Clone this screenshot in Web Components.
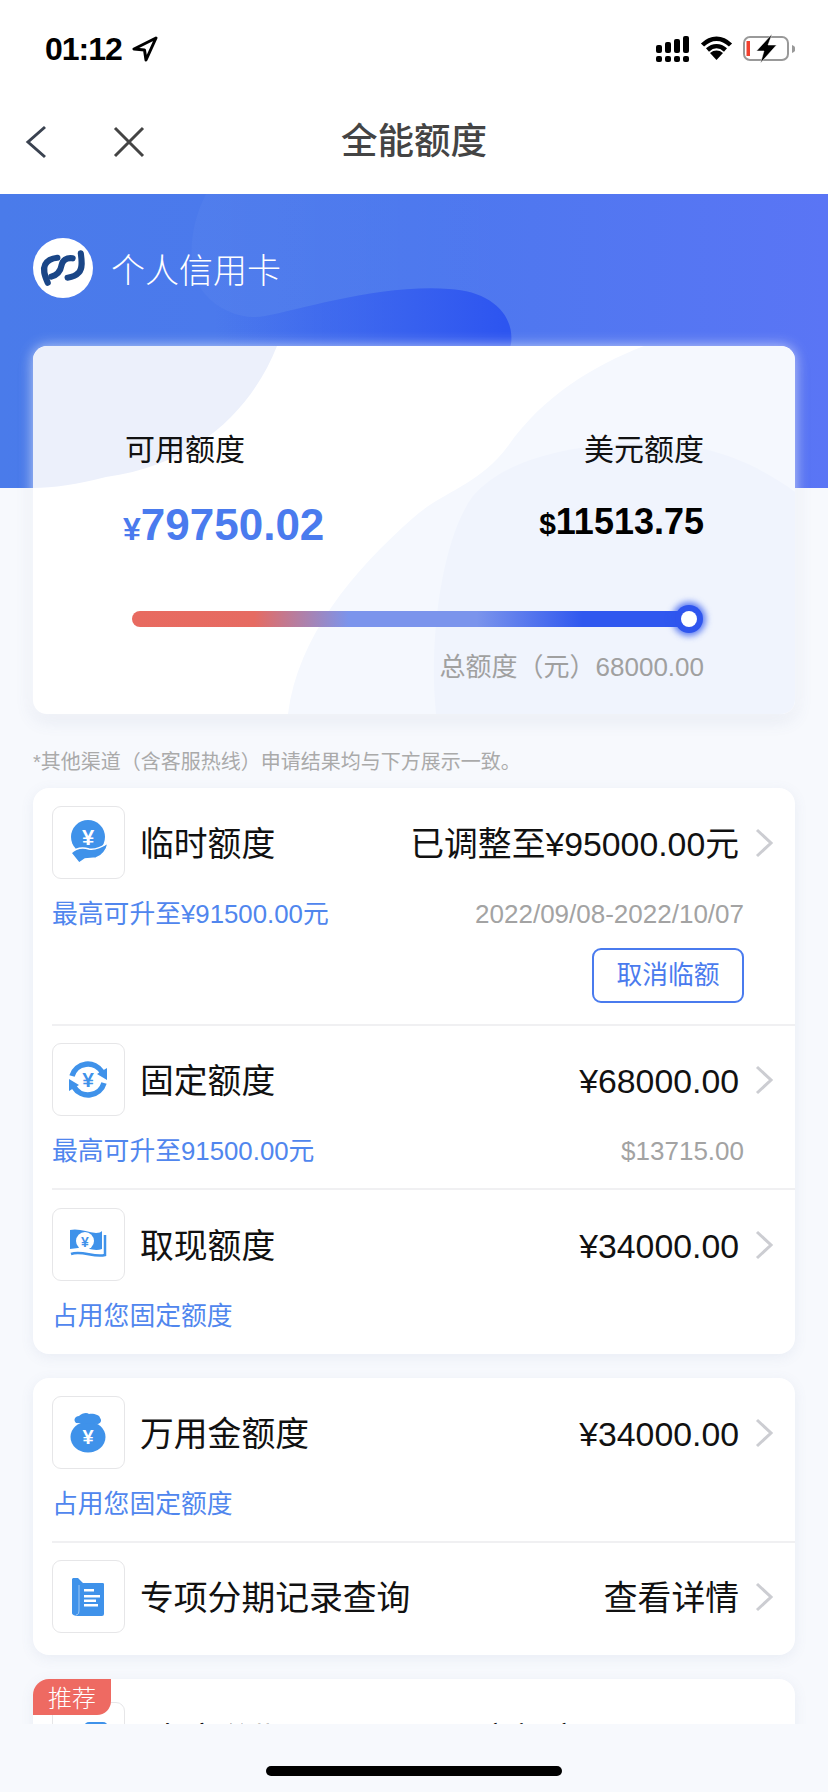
<!DOCTYPE html>
<html lang="zh-CN">
<head>
<meta charset="utf-8">
<title>全能额度</title>
<style>
  html, body { margin: 0; padding: 0; background: #f7f9fd; }
  body { width: 828px; height: 1792px; overflow: hidden; font-family: "Liberation Sans", "Noto Sans CJK SC", sans-serif; }
</style>
</head>
<body>
<quota-app></quota-app>

<script>
class StatusBar extends HTMLElement {
    constructor() {
        super();
        this.shadow = this.attachShadow({mode:'open'});
    }

    connectedCallback() {
        this.shadow.innerHTML = `
        <style>
            :host { display: flex; height: 98px; align-items: center; justify-content: space-between; padding: 0 33px 0 45px; background: #fff; box-sizing: border-box; }
            .left { display: flex; align-items: center; gap: 10px; }
            .time { font: 700 32px/1 "Liberation Sans", sans-serif; letter-spacing: -1px; color: #000; }
            svg { display: block; }
        </style>
        <div class="left">
            <span class="time">01:12</span>
            <svg width="26" height="26" viewBox="0 0 26 26"><path d="M24 2 L2 13 L12.5 14 L14 24 Z" fill="none" stroke="#000" stroke-width="3" stroke-linejoin="round"/></svg>
        </div>
        <svg width="140" height="30" viewBox="654 35 140 30">
            <g fill="#000">
                <rect x="655" y="46" width="6" height="8" rx="2"/>
                <rect x="664" y="43" width="6" height="11" rx="2"/>
                <rect x="673" y="40" width="6" height="14" rx="2"/>
                <rect x="682" y="37" width="6" height="17" rx="2"/>
                <rect x="655" y="57" width="6" height="6" rx="2"/>
                <rect x="664" y="57" width="6" height="6" rx="2"/>
                <rect x="673" y="57" width="6" height="6" rx="2"/>
                <rect x="682" y="57" width="6" height="6" rx="2"/>
                <path d="M715.5 61 L709 54 C713 50.700 718 50.700 722 54 Z"/>
            </g>
            <g fill="none" stroke="#000" stroke-width="4.500">
                <path d="M701.5 46 C710 37.5 721 37.5 729.5 46"/>
                <path d="M706.5 51 C712 46 719 46 724.5 51"/>
            </g>
            <rect x="743" y="38" width="44" height="23" rx="6" fill="none" stroke="#999" stroke-width="2"/>
            <path d="M791 46 C793.5 47 794.5 48.5 794.5 50 C794.5 51.5 793.5 53 791 54 Z" fill="#999"/>
            <rect x="745.5" y="42" width="3.5" height="15" fill="#f0402e"/>
            <path d="M771 35 L755.500 52 L763 52 L759.500 64 L775.500 46 L767 46 Z" fill="#000" stroke="#fff" stroke-width=".5"/>
        </svg>
        `;
    }
}

class NavBar extends HTMLElement {
    constructor() {
        super();
        this.shadow = this.attachShadow({mode:'open'});
    }

    connectedCallback() {
        this.shadow.innerHTML = `
        <style>
            :host { display: grid; grid-template-columns: 1fr auto 1fr; height: 96px; padding-bottom: 8px; box-sizing: border-box; align-items: center; background: #fff; }
            .btns { display: flex; align-items: center; gap: 66px; padding-left: 25px; }
            .title { font-size: 36.500px; line-height: 1; font-weight: 500; color: #444; }
            svg { display: block; }
        </style>
        <div class="btns">
            <svg width="22" height="34" viewBox="0 0 22 34"><path d="M20 2 L3 17 L20 32" fill="none" stroke="#3a4250" stroke-width="3"/></svg>
            <svg width="32" height="32" viewBox="0 0 32 32"><path d="M2 2 L30 30 M30 2 L2 30" fill="none" stroke="#444" stroke-width="3"/></svg>
        </div>
        <div class="title"><slot></slot></div>
        <div></div>
        `;
    }
}

class BankHero extends HTMLElement {
    constructor() {
        super();
        this.shadow = this.attachShadow({mode:'open'});
    }

    connectedCallback() {
        this.shadow.innerHTML = `
        <style>
            :host { display: block; position: relative; height: 294px; overflow: hidden; background: linear-gradient(90deg, #4a7bea 0%, #4c78ee 50%, #5a75f5 100%); }
            .deco { position: absolute; inset: 0; }
            .brand { position: relative; display: flex; align-items: center; gap: 18px; padding: 44px 0 0 33px; }
            .name { padding-top: 6px; font-size: 34px; line-height: 1; font-weight: 300; color: #fff; }
            svg { display: block; }
        </style>
        <svg class="deco" width="828" height="294" viewBox="0 0 828 294">
            <defs>
                <linearGradient id="lt" x1="190" x2="520" y1="0" y2="0" gradientUnits="userSpaceOnUse">
                    <stop offset="0" stop-color="#fff" stop-opacity=".03"/>
                    <stop offset="1" stop-color="#fff" stop-opacity="0"/>
                </linearGradient>
                <linearGradient id="dk" x1="215" x2="505" y1="0" y2="0" gradientUnits="userSpaceOnUse">
                    <stop offset="0" stop-color="#3058ef" stop-opacity="0"/>
                    <stop offset=".4" stop-color="#3058ef" stop-opacity=".45"/>
                    <stop offset="1" stop-color="#2d55f0"/>
                </linearGradient>
            </defs>
            <path d="M206 0 C188 35 186 78 205 100 C220 118 245 126 265 122 C300 116 380 90 449 95 C490 97 515 120 511 150 L828 150 V0 Z" fill="url(#lt)"/>
            <path d="M205 100 C220 118 245 126 265 122 C300 116 380 90 449 95 C490 97 515 120 511 150 L505 170 H190 Z" fill="url(#dk)"/>
        </svg>
        <div class="brand">
            <svg width="60" height="60" viewBox="0 0 59 59">
                <circle cx="29.500" cy="29.500" r="29.500" fill="#fff"/>
                <g fill="none" stroke="#1a4687" stroke-width="6" stroke-linecap="round">
                    <path d="M14.500 44 C11 36 9.500 31 12 26 C14.500 21.500 19 20 24 19.500"/>
                    <path d="M39 20 C33 19 29 22 28 27 C27 33 23 36.500 18 38"/>
                    <path d="M47 15 C48 22 49 30 45 34 C42 37.500 38 38.500 34 39"/>
                </g>
            </svg>
            <span class="name"><slot></slot></span>
        </div>
        `;
    }
}

class LimitPanel extends HTMLElement {
    constructor() {
        super();
        this.shadow = this.attachShadow({mode:'open'});
    }

    connectedCallback() {
        this.shadow.innerHTML = `
        <style>
            :host { display: block; position: relative; margin: -142px 33px 0; height: 368px; border-radius: 14px; background: #fff; box-shadow: 0 0 14px rgba(255,255,255,.65), 0 6px 18px rgba(90,110,160,.12); }
            .deco { position: absolute; inset: 0; border-radius: 14px; }
            .body { position: relative; padding: 84px 91px 0 92px; }
            .cols { display: flex; justify-content: space-between; }
            .col.right { text-align: right; }
            .label { font-size: 30px; line-height: 40px; color: #111; }
            .amount { height: 50px; line-height: 50px; margin: 30px 0 0 -2px; font-weight: 700; font-size: 44px; color: #4a7bee; font-family: "Liberation Sans", sans-serif; }
            .amount small { font-size: 32px; }
            .right .amount { margin-top: 27px; font-size: 36px; color: #000; }
            .right .amount small { font-size: 30px; }
            .track { position: relative; height: 16px; margin: 61px 16px 0 7px; border-radius: 8px; background: linear-gradient(90deg, #e86a60 0%, #e66b62 22%, #7b94ec 39%, #7b94ec 62%, #3058ef 81%, #3058ef 100%); }
            .knob { position: absolute; right: -9px; top: 0; width: 16px; height: 16px; border-radius: 50%; background: #fff; box-shadow: 0 0 0 6px #2f55ee, 0 0 6px 9px rgba(47,85,238,.75); }
            .total { margin-top: 25px; text-align: right; font-size: 26px; line-height: 30px; color: #a0a0a0; }
            svg { display: block; }
        </style>
        <svg class="deco" width="762" height="368" viewBox="0 0 762 368">
            <defs><clipPath id="round"><rect width="762" height="368" rx="14"/></clipPath></defs>
            <g clip-path="url(#round)">
                <path d="M0 0 H244 C222 56 170 118 73 131 Q30 142 0 142 Z" fill="#ecf0fb"/>
                <path d="M611 0 C560 20 510 50 475 100 C445 140 410 145 380 172 C320 225 265 290 255 368 H762 V0 Z" fill="#f5f8fe"/>
                <path d="M762 146 C710 108 660 95 600 97 C530 100 470 115 440 150 C410 190 395 290 403 368 H762 Z" fill="#f0f4fd"/>
            </g>
        </svg>
        <div class="body">
            <div class="cols">
                <div class="col">
                    <div class="label">可用额度</div>
                    <div class="amount"><small>¥</small>79750.02</div>
                </div>
                <div class="col right">
                    <div class="label">美元额度</div>
                    <div class="amount"><small>$</small>11513.75</div>
                </div>
            </div>
            <div class="track"><div class="knob"></div></div>
            <div class="total">总额度（元）68000.00</div>
        </div>
        `;
    }
}

class QuotaCard extends HTMLElement {
    constructor() {
        super();
        this.shadow = this.attachShadow({mode:'open'});
    }

    connectedCallback() {
        this.shadow.innerHTML = `
        <style>
            :host { display: block; position: relative; margin: 0 33px; border-radius: 16px; background: #fff; box-shadow: 0 3px 14px rgba(90,110,160,.09); }
            ::slotted(quota-row:not(:first-child)) { border-top: 2px solid #f0f0f2; margin-left: 19px; padding-left: 0; }
        </style>
        <slot></slot>
        `;
    }
}

class QuotaRow extends HTMLElement {
    constructor() {
        super();
        this.shadow = this.attachShadow({mode:'open'});
    }

    connectedCallback() {
        this.shadow.innerHTML = `
        <style>
            :host { display: block; padding: 18px 0 0 19px; }
            :host(:not(:first-child)) { padding-top: 17px; }
            .head { display: flex; align-items: center; height: 73px; padding-right: 21px; }
            .icon { flex: none; width: 73px; height: 73px; box-sizing: border-box; border: 1px solid #e6e6e8; border-radius: 9px; background: #fff; }
            .title { margin-left: 15px; padding-top: 5px; font-size: 33.800px; line-height: 1; color: #111; white-space: nowrap; }
            .value { flex: 1; padding-top: 5px; text-align: right; font-size: 33.800px; line-height: 1; color: #111; white-space: nowrap; }
            .chev { flex: none; margin-left: 16px; display: block; }
            .sub { display: flex; justify-content: space-between; align-items: center; margin-top: var(--sub-gap, 20px); padding-right: 51px; height: 30px; font-size: 25.800px; line-height: 30px; color: #5086ee; white-space: nowrap; }
            .aside { font-size: 26px; color: #a3a3a3; }
            .action { display: flex; justify-content: flex-end; padding-right: 51px; margin-top: 19px; }
            .foot { height: var(--foot, 22px); }
        </style>
        <div class="head">
            <div class="icon"><slot name="icon"></slot></div>
            <div class="title"><slot name="title"></slot></div>
            <div class="value"><slot name="value"></slot></div>
            <svg class="chev" width="19" height="30" viewBox="0 0 19 30"><path d="M2 2 L16 15 L2 28" fill="none" stroke="#cccdd2" stroke-width="3"/></svg>
        </div>
        ${this.hasAttribute("nosub") ? "" : `<div class="sub"><span><slot name="sub"></slot></span><span class="aside"><slot name="aside"></slot></span></div>`}
        ${this.hasAttribute("action") ? `<div class="action"><outline-button>${this.getAttribute("action")}</outline-button></div>` : ""}
        <div class="foot"></div>
        `;
    }
}

class OutlineButton extends HTMLElement {
    constructor() {
        super();
        this.shadow = this.attachShadow({mode:'open'});
    }

    connectedCallback() {
        this.shadow.innerHTML = `
        <style>
            :host { display: flex; align-items: center; justify-content: center; width: 152px; height: 55px; box-sizing: border-box; border: 2px solid #4a7bee; border-radius: 9px; font-size: 25.800px; line-height: 1; color: #4a7bee; }
        </style>
        <slot></slot>
        `;
    }
}

class HomeBar extends HTMLElement {
    constructor() {
        super();
        this.shadow = this.attachShadow({mode:'open'});
    }

    connectedCallback() {
        this.shadow.innerHTML = `
        <style>
            :host { display: flex; justify-content: center; flex: none; height: 68px; padding-top: 42px; box-sizing: border-box; background: #f7f9fd; }
            div { width: 296px; height: 10px; border-radius: 5px; background: #000; }
        </style>
        <div></div>
        `;
    }
}

// icons share one viewBox, same size as the tile around them
const ICONS = {
    hand: `<circle cx="36" cy="31" r="17" fill="#3f92ea"/>
           <text x="36" y="39" text-anchor="middle" font-family="Liberation Sans" font-weight="700" font-size="22" fill="#fff">¥</text>
           <path d="M19 47 C24 42 30 41 37 43 C44 44 50 41 56 37 C55 44 50 50 44 52 L33 53 L27 57 Z" fill="#3f92ea" stroke="#fff" stroke-width="1.500"/>`,
    cycle: `<g fill="none" stroke="#3f92ea" stroke-width="5.500">
               <path d="M20 33 A16.500 16.500 0 0 1 50 29"/>
               <path d="M52 40 A16.500 16.500 0 0 1 22 44"/>
           </g>
           <path d="M45 31 L55 37 L55 25 Z M27 42 L17 36 L17 48 Z" fill="#3f92ea"/>
           <text x="36" y="44" text-anchor="middle" font-family="Liberation Sans" font-weight="700" font-size="21" fill="#3f92ea">¥</text>`,
    note: `<path d="M18 22 C26 20 36 24 44 25 C47 25 49 24 50 23 V41 C42 44 34 39 26 40 L18 41 Z" fill="#3f92ea"/>
           <circle cx="33" cy="33" r="9" fill="#fff"/>
           <text x="33" y="38.500" text-anchor="middle" font-family="Liberation Sans" font-weight="700" font-size="14" fill="#3f92ea">¥</text>
           <path d="M53 27 V47 C42 50 30 42 19 46" fill="none" stroke="#3f92ea" stroke-width="2.500"/>`,
    bag: `<ellipse cx="36" cy="41" rx="17.500" ry="15.500" fill="#3f92ea"/>
          <path d="M24 27 C21 24 23 20 27 20 C30 17 35 16 37 18 C41 17 48 19 48 22 C50 24 49 27 46 28 Z" fill="#3f92ea"/>
          <text x="36" y="48" text-anchor="middle" font-family="Liberation Sans" font-weight="700" font-size="20" fill="#fff">¥</text>`,
    doc: `<path d="M21 18 H26 L31 23 H51 A1.500 1.500 0 0 1 52 25 V54 A2 2 0 0 1 50 56 H26 C23 56 20 55 20 53 V19 Z" fill="#3f92ea"/>
          <path d="M27 25 V50 C27 53 26 55 24 55" fill="none" stroke="#fff" stroke-opacity=".5" stroke-width="1"/>
          <g fill="#fff"><rect x="32" y="29" width="10" height="2.500"/><rect x="32" y="35" width="16" height="2.500"/><rect x="32" y="39.500" width="12" height="2.500"/><rect x="32" y="44" width="14" height="2.500"/></g>`,
    block: `<rect x="32" y="20" width="24" height="30" rx="5" fill="#3f92ea"/>`
};

class TileIcon extends HTMLElement {
    constructor() {
        super();
        this.shadow = this.attachShadow({mode:'open'});
    }

    connectedCallback() {
        this.shadow.innerHTML = `
        <style>
            :host { display: block; }
            svg { display: block; }
        </style>
        <svg width="71" height="71" viewBox="1 1 71 71">${ICONS[this.getAttribute("name")]}</svg>
        `;
    }
}

class QuotaApp extends HTMLElement {
    constructor() {
        super();
        this.shadow = this.attachShadow({mode:'open'});
    }

    connectedCallback() {
        this.shadow.innerHTML = `
        <style>
            :host { display: flex; flex-direction: column; width: 828px; height: 1792px; overflow: hidden; background: #f7f9fd; font-family: "Liberation Sans", "Noto Sans CJK SC", sans-serif; }
            main { flex: 1; min-height: 0; overflow: hidden; }
            .note { margin: 34px 33px 12px; font-size: 20px; line-height: 28px; color: #aaa; white-space: nowrap; }
            .gap { height: 24px; }
            .badge { position: absolute; left: 0; top: 0; width: 78px; height: 36px; padding-top: 3px; box-sizing: border-box; display: flex; align-items: center; justify-content: center; background: #ee6a62; color: #fff; font-size: 24px; line-height: 1; font-weight: 300; border-radius: 16px 0 14px 0; z-index: 1; }
            .clipped { display: flex; gap: 158px; margin-left: 12px; }
            quota-row.tight { --foot: 23px; padding-top: 18px; }
            quota-row.first { --foot: 21px; }
            quota-row.promo { padding-top: 23px; }
        </style>
        <status-bar></status-bar>
        <nav-bar>全能额度</nav-bar>
        <main>
            <bank-hero>个人信用卡</bank-hero>
            <limit-panel></limit-panel>
            <div class="note">*其他渠道（含客服热线）申请结果均与下方展示一致。</div>

            <quota-card>
                <quota-row class="first" action="取消临额">
                    <tile-icon slot="icon" name="hand"></tile-icon>
                    <span slot="title">临时额度</span>
                    <span slot="value">已调整至¥95000.00元</span>
                    <span slot="sub">最高可升至¥91500.00元</span>
                    <span slot="aside">2022/09/08-2022/10/07</span>
                </quota-row>
                <quota-row>
                    <tile-icon slot="icon" name="cycle"></tile-icon>
                    <span slot="title">固定额度</span>
                    <span slot="value">¥68000.00</span>
                    <span slot="sub">最高可升至91500.00元</span>
                    <span slot="aside">$13715.00</span>
                </quota-row>
                <quota-row class="tight">
                    <tile-icon slot="icon" name="note"></tile-icon>
                    <span slot="title">取现额度</span>
                    <span slot="value">¥34000.00</span>
                    <span slot="sub">占用您固定额度</span>
                </quota-row>
            </quota-card>
            <div class="gap"></div>

            <quota-card>
                <quota-row>
                    <tile-icon slot="icon" name="bag"></tile-icon>
                    <span slot="title">万用金额度</span>
                    <span slot="value">¥34000.00</span>
                    <span slot="sub">占用您固定额度</span>
                </quota-row>
                <quota-row nosub>
                    <tile-icon slot="icon" name="doc"></tile-icon>
                    <span slot="title">专项分期记录查询</span>
                    <span slot="value">查看详情</span>
                </quota-row>
            </quota-card>
            <div class="gap"></div>

            <quota-card>
                <quota-row class="promo">
                    <tile-icon slot="icon" name="block"></tile-icon>
                    <span slot="title" class="clipped"><span>专享分期</span><span>最高额度</span></span>
                </quota-row>
                <div class="badge">推荐</div>
            </quota-card>
        </main>
        <home-bar></home-bar>
        `;
    }
}

customElements.define('status-bar', StatusBar);
customElements.define('nav-bar', NavBar);
customElements.define('bank-hero', BankHero);
customElements.define('limit-panel', LimitPanel);
customElements.define('quota-card', QuotaCard);
customElements.define('quota-row', QuotaRow);
customElements.define('outline-button', OutlineButton);
customElements.define('home-bar', HomeBar);
customElements.define('tile-icon', TileIcon);
customElements.define('quota-app', QuotaApp);
</script>
</body>
</html>
